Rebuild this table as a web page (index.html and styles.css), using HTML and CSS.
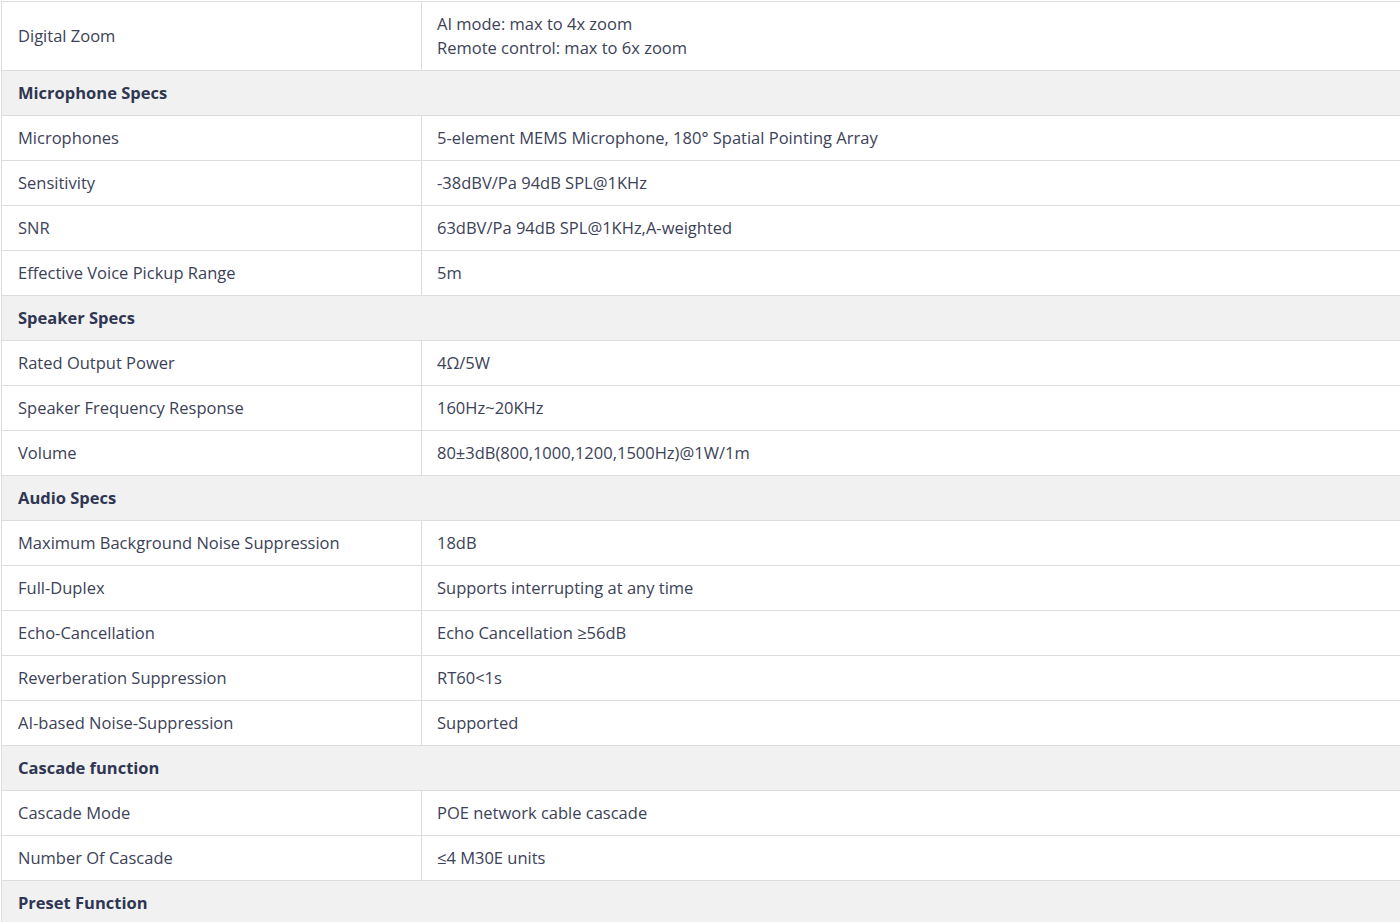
FILE: index.html
```html
<!DOCTYPE html>
<html lang="en">
<head>
<meta charset="utf-8">
<title>Specs</title>
<link rel="stylesheet" href="styles.css">
</head>
<body>
<table class="specs">
  <colgroup><col class="c1"><col class="c2"></colgroup>
  <tbody>
    <tr class="tall"><td>Digital Zoom</td><td>AI mode: max to 4x zoom<br>Remote control: max to 6x zoom</td></tr>
    <tr class="sec"><td colspan="2">Microphone Specs</td></tr>
    <tr><td>Microphones</td><td>5-element MEMS Microphone, 180° Spatial Pointing Array</td></tr>
    <tr><td>Sensitivity</td><td>-38dBV/Pa 94dB SPL@1KHz</td></tr>
    <tr><td>SNR</td><td>63dBV/Pa 94dB SPL@1KHz,A-weighted</td></tr>
    <tr><td>Effective Voice Pickup Range</td><td>5m</td></tr>
    <tr class="sec"><td colspan="2">Speaker Specs</td></tr>
    <tr><td>Rated Output Power</td><td>4Ω/5W</td></tr>
    <tr><td>Speaker Frequency Response</td><td>160Hz~20KHz</td></tr>
    <tr><td>Volume</td><td>80±3dB(800,1000,1200,1500Hz)@1W/1m</td></tr>
    <tr class="sec"><td colspan="2">Audio Specs</td></tr>
    <tr><td>Maximum Background Noise Suppression</td><td>18dB</td></tr>
    <tr><td>Full-Duplex</td><td>Supports interrupting at any time</td></tr>
    <tr><td>Echo-Cancellation</td><td>Echo Cancellation ≥56dB</td></tr>
    <tr><td>Reverberation Suppression</td><td>RT60&lt;1s</td></tr>
    <tr><td>AI-based Noise-Suppression</td><td>Supported</td></tr>
    <tr class="sec"><td colspan="2">Cascade function</td></tr>
    <tr><td>Cascade Mode</td><td>POE network cable cascade</td></tr>
    <tr><td>Number Of Cascade</td><td>≤4 M30E units</td></tr>
    <tr class="sec"><td colspan="2">Preset Function</td></tr>
  </tbody>
</table>
</body>
</html>
```

FILE: styles.css
```css
html, body {
  margin: 0;
  padding: 0;
  background: #ffffff;
}
body {
  padding: 1px 0 0 1px;
  overflow: hidden;
  font-family: "Open Sans", "Noto Sans", "Liberation Sans", sans-serif;
  font-size: 16.5px;
  color: #3c4258;
}
.specs {
  border-collapse: collapse;
  width: 1400px;
  table-layout: fixed;
}
.c1 { width: 420px; }
.specs td {
  border: 1px solid #dddddd;
  height: 45px;
  box-sizing: border-box;
  padding: 0 16px;
  line-height: 24px;
  vertical-align: middle;
}
.specs tr td:first-child { padding-left: 16px; }
.specs tr td:nth-child(2) { padding-left: 15px; }
.specs tr.tall td {
  height: 69px;
}
.specs tr.sec td {
  background: #f1f1f1;
  font-weight: 700;
  color: #2f3651;
}
```
